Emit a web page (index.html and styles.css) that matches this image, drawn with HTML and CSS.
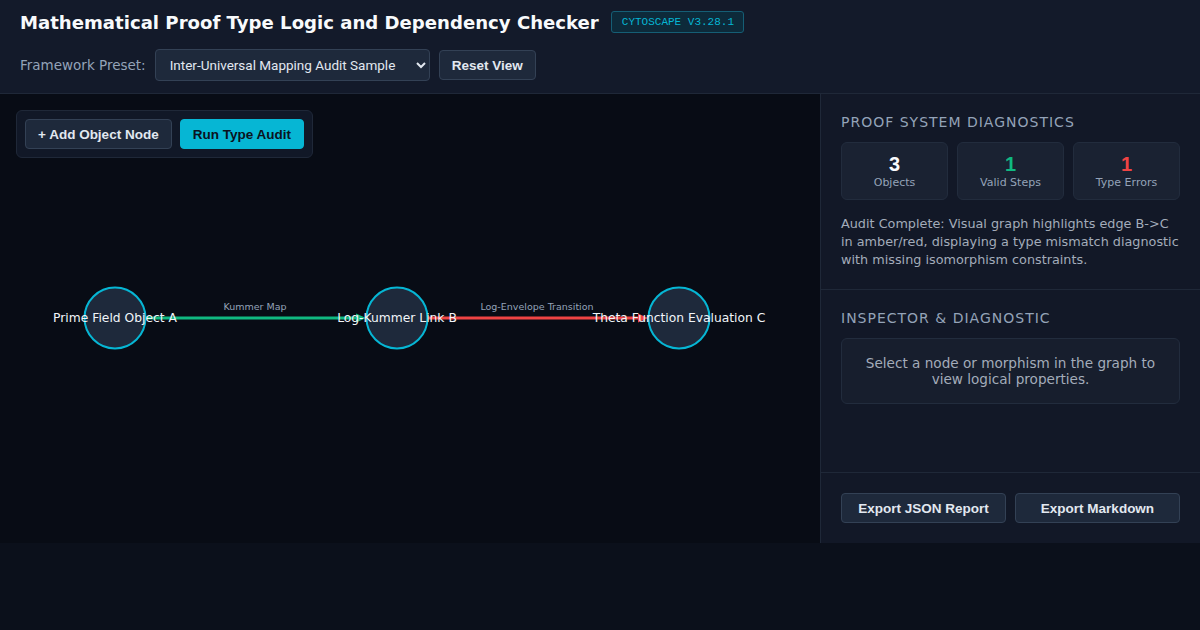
FILE: index.html
```html
<!DOCTYPE html>
<html lang="en">
  <head>
    <meta charset="UTF-8" />
    <meta name="viewport" content="width=device-width, initial-scale=1.0" />
    <title>Proof Type Logic Checker</title>
    <link rel="stylesheet" href="styles.css">
  </head>
  <body>
    <header class="topbar">
      <div class="title-row">
        <h1>Mathematical Proof Type Logic and Dependency Checker</h1>
        <span class="badge">CYTOSCAPE V3.28.1</span>
      </div>
      <div class="controls">
        <label for="preset">Framework Preset:</label>
        <select id="preset">
          <option>Inter-Universal Mapping Audit Sample</option>
        </select>
        <button class="btn">Reset View</button>
      </div>
    </header>

    <main class="workspace">
      <section class="canvas">
        <div class="toolbar">
          <button class="btn">+ Add Object Node</button>
          <button class="btn btn-primary">Run Type Audit</button>
        </div>
        <svg class="graph" width="820" height="449" viewBox="0 0 820 449">
          <!-- morphisms -->
          <line x1="146" y1="224" x2="356" y2="224" stroke="#10b981" stroke-width="3" />
          <polygon points="366,224 356,219.5 356,228.5" fill="#10b981" />
          <line x1="428" y1="224" x2="638" y2="224" stroke="#ef4444" stroke-width="3" />
          <polygon points="648,224 638,219.5 638,228.5" fill="#ef4444" />
          <text class="edge-label" x="255" y="216">Kummer Map</text>
          <text class="edge-label" x="537" y="216">Log-Envelope Transition</text>
          <!-- objects -->
          <circle cx="115" cy="224" r="30.5" fill="#1e293b" stroke="#06b6d4" stroke-width="2" />
          <circle cx="397" cy="224" r="30.5" fill="#1e293b" stroke="#06b6d4" stroke-width="2" />
          <circle cx="679" cy="224" r="30.5" fill="#1e293b" stroke="#06b6d4" stroke-width="2" />
          <text class="node-label" x="115" y="228">Prime Field Object A</text>
          <text class="node-label" x="397" y="228">Log-Kummer Link B</text>
          <text class="node-label" x="679" y="228">Theta Function Evaluation C</text>
        </svg>
      </section>

      <aside class="sidebar">
        <div class="panel">
          <h3>Proof System Diagnostics</h3>
          <div class="stats">
            <div class="stat">
              <div class="stat-value">3</div>
              <div class="stat-label">Objects</div>
            </div>
            <div class="stat">
              <div class="stat-value ok">1</div>
              <div class="stat-label">Valid Steps</div>
            </div>
            <div class="stat">
              <div class="stat-value bad">1</div>
              <div class="stat-label">Type Errors</div>
            </div>
          </div>
          <p class="summary">
            Audit Complete: Visual graph highlights edge B-&gt;C in amber/red, displaying a type mismatch diagnostic with missing isomorphism constraints.
          </p>
        </div>
        <div class="panel panel-grow">
          <h3>Inspector &amp; Diagnostic</h3>
          <div class="inspector">
            Select a node or morphism in the graph to view logical properties.
          </div>
        </div>
        <div class="panel exports">
          <button class="btn">Export JSON Report</button>
          <button class="btn">Export Markdown</button>
        </div>
      </aside>
    </main>
  </body>
</html>
```

FILE: styles.css
```css
body {
  margin: 0;
  background-color: #0b101b;
  color: #f1f5f9;
  font-family: "DejaVu Sans", sans-serif;
}
.topbar {
  background-color: #131a2a;
  border-bottom: 1px solid #1f2838;
  padding: 11px 20px 12px;
  height: 70px;
}
.title-row {
  display: flex;
  align-items: center;
  gap: 12px;
}
h1 {
  margin: 0;
  font-size: 18.1px;
  font-weight: 700;
  color: #f8fafc;
}
.badge {
  font-family: "Liberation Mono", monospace;
  font-size: 11px;
  color: #06b6d4;
  background-color: #0d2a3a;
  border: 1px solid #155e75;
  border-radius: 3px;
  padding: 4px 9px 4px 10px;
}
.controls {
  display: flex;
  align-items: center;
  gap: 9px;
  margin-top: 16px;
}
.controls label {
  font-size: 13.5px;
  color: #94a3b8;
}
select {
  font-family: Roboto, sans-serif;
  font-size: 13.5px;
  color: #e2e8f0;
  background-color: #1e293b;
  border: 1px solid #334155;
  border-radius: 4px;
  height: 32px;
  width: 275px;
  padding: 0 8px 0 10px;
}
.btn {
  font-family: "Liberation Sans", Arial, sans-serif;
  font-weight: 700;
  font-size: 13.5px;
  color: #e2e8f0;
  background-color: #1e293b;
  border: 1px solid #334155;
  border-radius: 4px;
  height: 30px;
  padding: 0 12px;
  cursor: pointer;
}
.btn:hover {
  background-color: #273449;
}
.btn-primary {
  background-color: #06b6d4;
  border-color: #06b6d4;
  color: #0b1220;
}
.btn-primary:hover {
  background-color: #0891b2;
}
.workspace {
  display: flex;
  height: 449px;
}
.canvas {
  position: relative;
  width: 820px;
  background-color: #080c15;
}
.toolbar {
  position: absolute;
  top: 16px;
  left: 16px;
  display: flex;
  gap: 8px;
  padding: 8px;
  background-color: #111827;
  border: 1px solid #1f2838;
  border-radius: 6px;
}
.graph {
  display: block;
}
.node-label {
  font-size: 12.3px;
  fill: #f1f5f9;
  text-anchor: middle;
}
.edge-label {
  font-size: 9.5px;
  fill: #94a3b8;
  text-anchor: middle;
}
.sidebar {
  flex: 1;
  display: flex;
  flex-direction: column;
  background-color: #121827;
  border-left: 1px solid #1f2838;
}
.panel {
  padding: 20px;
  border-bottom: 1px solid #1f2838;
}
.panel-grow {
  flex: 1;
}
.panel h3 {
  margin: 0 0 12px;
  font-size: 14px;
  font-weight: 400;
  text-transform: uppercase;
  letter-spacing: 1px;
  color: #94a3b8;
}
.stats {
  display: grid;
  grid-template-columns: repeat(3, 1fr);
  gap: 9px;
}
.stat {
  background-color: #1a2232;
  border: 1px solid #222c3d;
  border-radius: 6px;
  height: 56px;
  display: flex;
  flex-direction: column;
  align-items: center;
  justify-content: center;
}
.stat-value {
  font-family: "Liberation Sans", Arial, sans-serif;
  font-size: 20px;
  font-weight: 700;
  line-height: 20px;
  color: #f8fafc;
}
.stat-value.ok {
  color: #10b981;
}
.stat-value.bad {
  color: #ef4444;
}
.stat-label {
  font-size: 11px;
  color: #94a3b8;
  margin-top: 2px;
}
.summary {
  margin: 15px 0 0;
  font-size: 12.8px;
  line-height: 18px;
  color: #a3acba;
}
.inspector {
  background-color: #171e2d;
  border: 1px solid #222c3d;
  border-radius: 6px;
  padding: 16px 20px;
  text-align: center;
  font-size: 13.6px;
  line-height: 16px;
  color: #a3acba;
}
.exports {
  border-bottom: none;
  display: flex;
  gap: 9px;
}
.exports .btn {
  flex: 1;
}
```
